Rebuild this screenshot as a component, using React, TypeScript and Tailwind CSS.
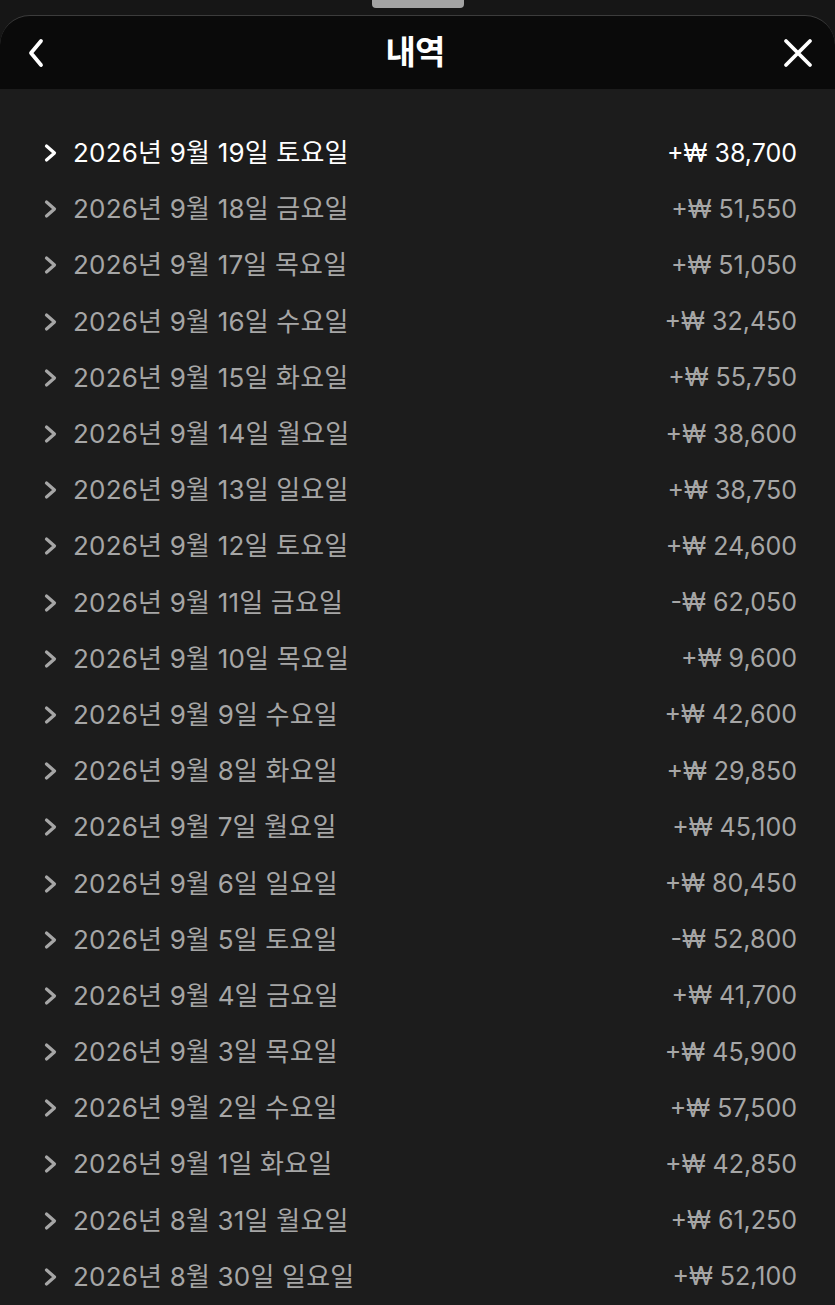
import React from "react";

const rows: [string, string][] = [
  ["2026년 9월 19일 토요일", "+₩ 38,700"],
  ["2026년 9월 18일 금요일", "+₩ 51,550"],
  ["2026년 9월 17일 목요일", "+₩ 51,050"],
  ["2026년 9월 16일 수요일", "+₩ 32,450"],
  ["2026년 9월 15일 화요일", "+₩ 55,750"],
  ["2026년 9월 14일 월요일", "+₩ 38,600"],
  ["2026년 9월 13일 일요일", "+₩ 38,750"],
  ["2026년 9월 12일 토요일", "+₩ 24,600"],
  ["2026년 9월 11일 금요일", "-₩ 62,050"],
  ["2026년 9월 10일 목요일", "+₩ 9,600"],
  ["2026년 9월 9일 수요일", "+₩ 42,600"],
  ["2026년 9월 8일 화요일", "+₩ 29,850"],
  ["2026년 9월 7일 월요일", "+₩ 45,100"],
  ["2026년 9월 6일 일요일", "+₩ 80,450"],
  ["2026년 9월 5일 토요일", "-₩ 52,800"],
  ["2026년 9월 4일 금요일", "+₩ 41,700"],
  ["2026년 9월 3일 목요일", "+₩ 45,900"],
  ["2026년 9월 2일 수요일", "+₩ 57,500"],
  ["2026년 9월 1일 화요일", "+₩ 42,850"],
  ["2026년 8월 31일 월요일", "+₩ 61,250"],
  ["2026년 8월 30일 일요일", "+₩ 52,100"],
];

const font = { fontFamily: "Inter, 'Noto Sans CJK KR', sans-serif" };

function Chevron({ color }: { color: string }) {
  return (
    <svg width="16" height="20" viewBox="0 0 16 20" fill="none">
      <path d="M3.5 3 L11.5 10 L3.5 17" stroke={color} strokeWidth="3.2" strokeLinecap="round" strokeLinejoin="round" />
    </svg>
  );
}

export default function App() {
  return (
    <div className="w-[835px] h-[1305px] overflow-hidden bg-[#161616] flex flex-col" style={font}>
      <div className="h-[15px] flex justify-center shrink-0">
        <div className="w-[92px] h-[8px] bg-[#a3a3a3] rounded-b-[4px]" />
      </div>
      <div className="h-[74px] bg-[#0a0a0a] rounded-t-[30px] border-t border-[#3c3c3c] flex items-center justify-between pl-[25px] pr-[22px] shrink-0">
        <svg width="22" height="32" viewBox="0 0 22 32" fill="none">
          <path d="M16 4 L6 16 L16 28" stroke="white" strokeWidth="3.8" strokeLinecap="round" strokeLinejoin="round" />
        </svg>
        <div className="text-white text-[33px] font-bold tracking-tight leading-none">내역</div>
        <svg width="30" height="30" viewBox="0 0 30 30" fill="none">
          <path d="M3 3 L27 27 M27 3 L3 27" stroke="white" strokeWidth="3.8" strokeLinecap="round" />
        </svg>
      </div>
      <div className="flex-1 bg-[#1c1c1c] pt-[36px] pl-[43px] pr-[38px]">
        {rows.map(([d, a], i) => {
          const c = i === 0 ? "#ffffff" : "#a6a6a6";
          return (
            <div key={i} className="h-[56.2px] flex items-center justify-between">
              <div className="flex items-center gap-[14px]">
                <Chevron color={c} />
                <span className="text-[26px] leading-none tracking-[0.2px]" style={{ color: c }}>{d}</span>
              </div>
              <span className="text-[25px] leading-none" style={{ color: c }}>{a}</span>
            </div>
          );
        })}
      </div>
    </div>
  );
}
